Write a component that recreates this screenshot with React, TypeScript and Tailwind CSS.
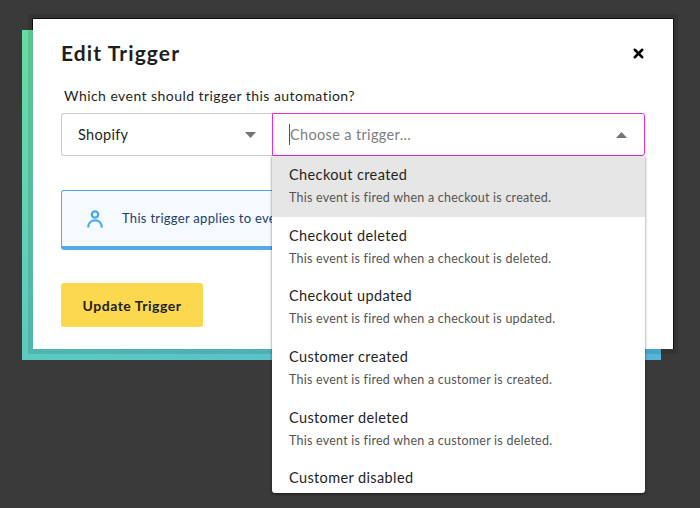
import { X } from 'lucide-react';

const triggers = [
  { title: 'Checkout created', text: 'This event is fired when a checkout is created.' },
  { title: 'Checkout deleted', text: 'This event is fired when a checkout is deleted.' },
  { title: 'Checkout updated', text: 'This event is fired when a checkout is updated.' },
  { title: 'Customer created', text: 'This event is fired when a customer is created.' },
  { title: 'Customer deleted', text: 'This event is fired when a customer is deleted.' },
  { title: 'Customer disabled', text: '' },
];

const Caret = ({ up = false }: { up?: boolean }) => (
  <svg width="11" height="6" viewBox="0 0 11 6" className="shrink-0">
    <path d={up ? 'M0 6 L5.5 0 L11 6 Z' : 'M0 0 L5.5 6 L11 0 Z'} fill="#757575" />
  </svg>
);

export default function App() {
  return (
    <div className="h-[508px] w-[700px] overflow-hidden bg-[#3a3a3a] pl-[33px] pt-[19px] font-['Lato',sans-serif] text-[#1f1f1f]">
      <div className="relative h-[330px] w-[640px]">
        {/* dark edge, the green panel hides its lower left part */}
        <div className="absolute -left-px -top-px h-[331px] w-[642px] bg-[#111]" />
        <div className="absolute left-[-11px] top-[11px] h-[330px] w-[639px] bg-gradient-to-br from-[#66dda2] to-[#54b6dc]" />
        <div className="relative h-full bg-white pl-7 pr-7 pt-[22px] shadow-[0_0_0_5px_rgba(0,0,0,0.1)]">
          <div className="flex h-6 items-center justify-between">
            <h2 className="text-[21px] font-bold tracking-[1.1px]">Edit Trigger</h2>
            <X size={15} strokeWidth={4} color="#000" className="mr-[-1px]" />
          </div>
          <p className="ml-[3px] mt-[21px] text-[14px] leading-5 tracking-[0.45px]">Which event should trigger this automation?</p>
          <div className="mt-[7px] flex h-[43px]">
            <div className="flex w-[211px] items-center justify-between rounded-l-[3px] border border-r-0 border-[#cccccc] pl-[16px] pr-[16px] text-[14.5px] tracking-[0.3px]">
              <span>Shopify</span>
              <Caret />
            </div>
            <div className="flex w-[373px] items-center justify-between rounded-r-[3px] border border-[#e62ee6] pl-[16px] pr-[17px] text-[14.5px] tracking-[0.35px] text-[#808080]">
              <span className="border-l border-[#555]">Choose a trigger...</span>
              <Caret up />
            </div>
          </div>
          <div className="mt-[34px] flex h-[60px] w-[584px] items-center rounded-[3px] border border-b-[4px] border-[#54a9ee] bg-[#f5faff] pl-[25px]">
            <svg width="16" height="18" viewBox="0 0 16 18" fill="none" stroke="#4aa8ee" strokeWidth="2.3">
              <circle cx="8" cy="4.5" r="3.2" />
              <path d="M1.2 17.5 C1.2 13 4.2 10.4 8 10.4 C11.8 10.4 14.8 13 14.8 17.5" />
            </svg>
            <span className="ml-[19px] whitespace-nowrap text-[13px] tracking-[0.3px] text-[#1d4070]">This trigger applies to every Shopify store connected to your account.</span>
          </div>
          <button className="mt-[33px] h-[44px] w-[142px] rounded-[3px] bg-[#fbd84d] text-[14px] font-bold tracking-[0.5px]">Update Trigger</button>
        </div>
        <div className="absolute left-[239px] top-[137px] h-[337px] w-[373px] overflow-hidden rounded-b-[3px] bg-white shadow-[0_1px_3px_rgba(0,0,0,0.55)]">
          {triggers.map((t, i) => (
            <div key={t.title} className={`h-[60.7px] pl-[17px] pt-[9px] ${i === 0 ? 'bg-[#e6e6e6]' : ''}`}>
              <div className="text-[14.5px] leading-5 tracking-[0.38px]">{t.title}</div>
              {t.text && <div className="mt-[4px] text-[12.5px] leading-[18px] tracking-[0.23px] text-[#555]">{t.text}</div>}
            </div>
          ))}
        </div>
      </div>
    </div>
  );
}
